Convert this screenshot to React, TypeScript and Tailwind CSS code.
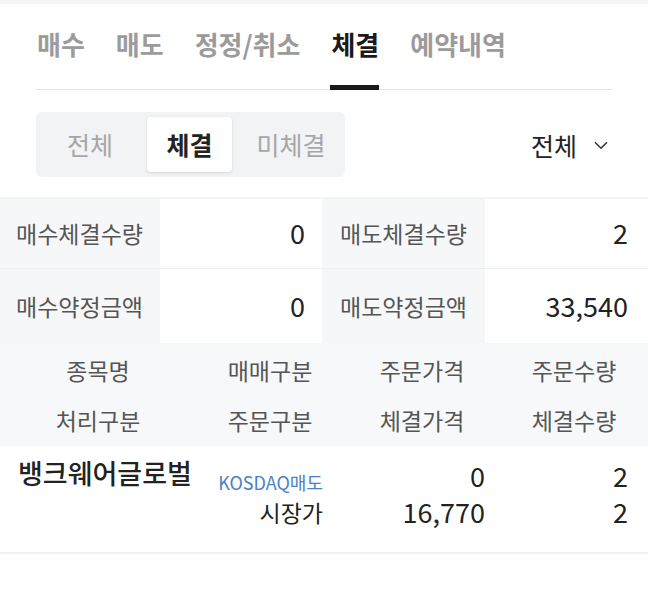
import React from "react";

const tabs = ["매수", "매도", "정정/취소", "체결", "예약내역"];

const summary = [
  ["매수체결수량", "0", "매도체결수량", "2"],
  ["매수약정금액", "0", "매도약정금액", "33,540"],
];

function Chevron() {
  return (
    <svg width="14" height="9" viewBox="0 0 14 9" fill="none">
      <path d="M1 1.2L7 7.2L13 1.2" stroke="#333" strokeWidth="1.6" />
    </svg>
  );
}

export default function App() {
  return (
    <div className="w-[648px] h-[590px] overflow-hidden bg-white font-['Noto_Sans_CJK_KR','Noto_Sans',sans-serif] text-[#222]">
      {/* top strip */}
      <div className="h-[4px] bg-[#f4f5f7]" />

      {/* tabs */}
      <div className="px-[36px]">
        <div className="flex gap-[30px] h-[86px] border-b border-[#e4e4e4]">
          {tabs.map((t) => {
            const active = t === "체결";
            return (
              <div key={t} className="relative h-full pt-[24px] pl-[1px]">
                <span
                  className={`text-[26px] leading-[32px] font-bold ${
                    active ? "text-[#1a1a1a]" : "text-[#9b9b9b]"
                  }`}
                >
                  {t}
                </span>
                {active && (
                  <div className="absolute left-0 right-0 bottom-[-1px] h-[5px] bg-[#1a1a1a]" />
                )}
              </div>
            );
          })}
        </div>
      </div>

      {/* segment + dropdown */}
      <div className="h-[107px] flex items-start justify-between pl-[36px] pr-[40px] pt-[22px]">
        <div className="flex items-center w-[309px] h-[65px] rounded-[6px] bg-[#f2f3f5] px-[5px]">
          <div className="w-[106px] h-[55px] flex items-center justify-center pr-[8px] text-[25px] text-[#a6a6a6]">
            전체
          </div>
          <div className="w-[85px] h-[55px] flex items-center justify-center rounded-[4px] bg-white shadow-[0_1px_3px_rgba(0,0,0,0.12)] text-[25px] font-bold text-[#222]">
            체결
          </div>
          <div className="w-[108px] h-[55px] flex items-center justify-center pl-[10px] text-[25px] text-[#a6a6a6]">
            미체결
          </div>
        </div>
        <div className="flex items-center gap-[17px] h-[65px]">
          <span className="text-[25px] text-[#222] leading-[30px]">전체</span>
          <span className="mt-[2px]">
            <Chevron />
          </span>
        </div>
      </div>

      {/* summary */}
      <div className="border-t-2 border-[#f2f3f5]">
        {summary.map((row, i) => (
          <div
            key={i}
            className={`grid grid-cols-[160px_162px_163px_163px] ${
              i === 0 ? "h-[70px] border-b border-[#eceef0]" : "h-[74px]"
            }`}
          >
            <div className="bg-[#f6f7f9] flex items-center pl-[16px] text-[23px] text-[#555]">
              {row[0]}
            </div>
            <div className="flex items-center justify-end pr-[17px] text-[27px] text-[#222]">
              {row[1]}
            </div>
            <div className="bg-[#f6f7f9] flex items-center pl-[18px] text-[23px] text-[#555]">
              {row[2]}
            </div>
            <div className="flex items-center justify-end pr-[20px] text-[27px] text-[#222]">
              {row[3]}
            </div>
          </div>
        ))}
      </div>

      {/* list header */}
      <div className="bg-[#f7f8fa] h-[103px] pt-[2px] text-[23px] text-[#555]">
        <div className="grid grid-cols-[196px_148px_156px_148px] h-[50px] items-center text-center">
          <span>종목명</span>
          <span>매매구분</span>
          <span>주문가격</span>
          <span>주문수량</span>
        </div>
        <div className="grid grid-cols-[196px_148px_156px_148px] h-[50px] items-center text-center">
          <span>처리구분</span>
          <span>주문구분</span>
          <span>체결가격</span>
          <span>체결수량</span>
        </div>
      </div>

      {/* list row */}
      <div className="h-[108px] pt-[12px] border-b-2 border-[#f0f1f3] grid grid-cols-[196px_148px_156px_148px]">
        <div className="pl-[18px] text-[27px] leading-[30px] font-medium text-[#222] whitespace-nowrap">
          뱅크웨어글로벌
        </div>
        <div className="flex flex-col items-end pr-[21px]">
          <div className="h-[36px] flex items-end pb-[1px] text-[18px] leading-[22px] text-[#4b80c6] whitespace-nowrap">
            KOSDAQ매도
          </div>
          <div className="h-[36px] flex items-center text-[23px] text-[#222]">시장가</div>
        </div>
        <div className="flex flex-col items-end pr-[15px] text-[27px] text-[#222]">
          <div className="h-[36px] flex items-center">0</div>
          <div className="h-[36px] flex items-center">16,770</div>
        </div>
        <div className="flex flex-col items-end pr-[20px] text-[27px] text-[#222]">
          <div className="h-[36px] flex items-center">2</div>
          <div className="h-[36px] flex items-center">2</div>
        </div>
      </div>
    </div>
  );
}
